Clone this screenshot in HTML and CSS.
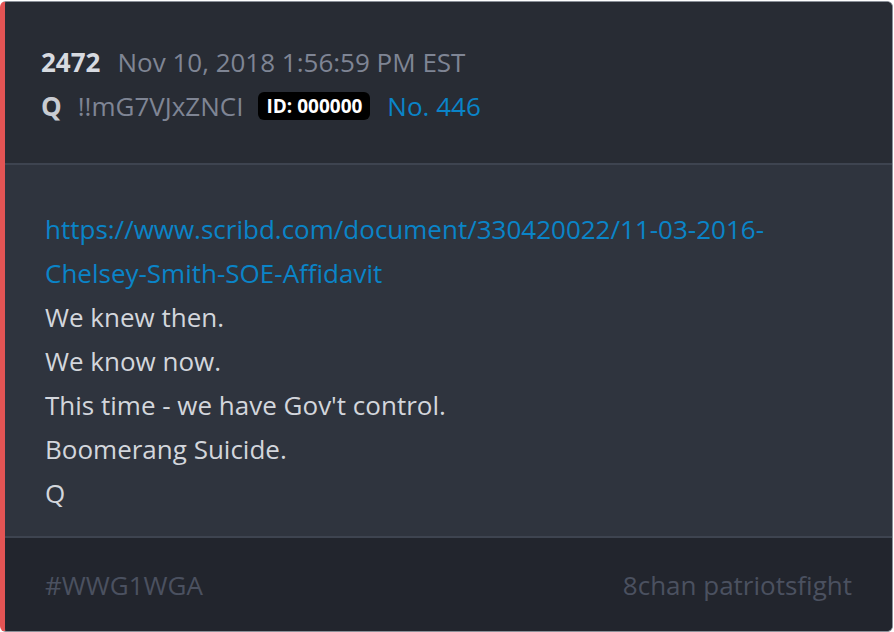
FILE: index.html
```html
<!DOCTYPE html>
<html>
<head>
<meta charset="utf-8">
<link rel="stylesheet" href="styles.css">
</head>
<body>
<div class="card">
  <div class="head">
    <div class="row"><span class="num">2472</span><span class="date">Nov 10, 2018 1:56:59 PM EST</span></div>
    <div class="row"><span class="name">Q</span><span class="trip">!!mG7VJxZNCI</span><span class="badge">ID: 000000</span><span class="no">No. 446</span></div>
  </div>
  <div class="body">
    <a class="link" href="#">https://www.scribd.com/document/330420022/11-03-2016-<br>Chelsey-Smith-SOE-Affidavit</a>
    <div>We knew then.</div>
    <div>We know now.</div>
    <div>This time - we have Gov't control.</div>
    <div>Boomerang Suicide.</div>
    <div>Q</div>
  </div>
  <div class="foot">
    <span>#WWG1WGA</span>
    <span>8chan patriotsfight</span>
  </div>
</div>
</body>
</html>
```
FILE: styles.css
```css
html, body { margin: 0; padding: 0; background: #ffffff; }
body { font-family: "Open Sans", "DejaVu Sans", sans-serif; font-size: 26px; }
.card {
  margin-top: 1px;
  width: 887px;
  height: 629px;
  border: 1px solid #8b9099;
  border-left: 5px solid #e35454;
  border-radius: 6px;
  overflow: hidden;
  display: flex;
  flex-direction: column;
  background: #2f343e;
}
.head {
  background: #282c34;
  padding: 38px 36px 34px;
  border-bottom: 2px solid #3e4450;
  height: 89px;
}
.row { display: flex; align-items: center; height: 44px; }
.num { font-weight: 700; color: #d7dae0; margin-right: 17px; }
.date { color: #7f8594; }
.name { font-weight: 700; color: #c9ccd2; margin-right: 16px; }
.trip { color: #7f8594; margin-right: 15px; }
.badge {
  background: #000;
  color: #fff;
  font-weight: 700;
  font-size: 19px;
  line-height: 28px;
  height: 28px;
  padding: 0 8px;
  border-radius: 6px;
  margin-right: 17px;
}
.no { color: #0a84c8; }
.body {
  flex: 1;
  padding: 42px 40px 0;
  line-height: 44px;
  color: #d3d6dc;
  border-bottom: 2px solid #3e4450;
}
.link { color: #0a84c8; text-decoration: none; }
.foot {
  background: #22252d;
  height: 93px;
  padding: 0 40px;
  display: flex;
  justify-content: space-between;
  align-items: center;
  color: #4b5160;
}
```
